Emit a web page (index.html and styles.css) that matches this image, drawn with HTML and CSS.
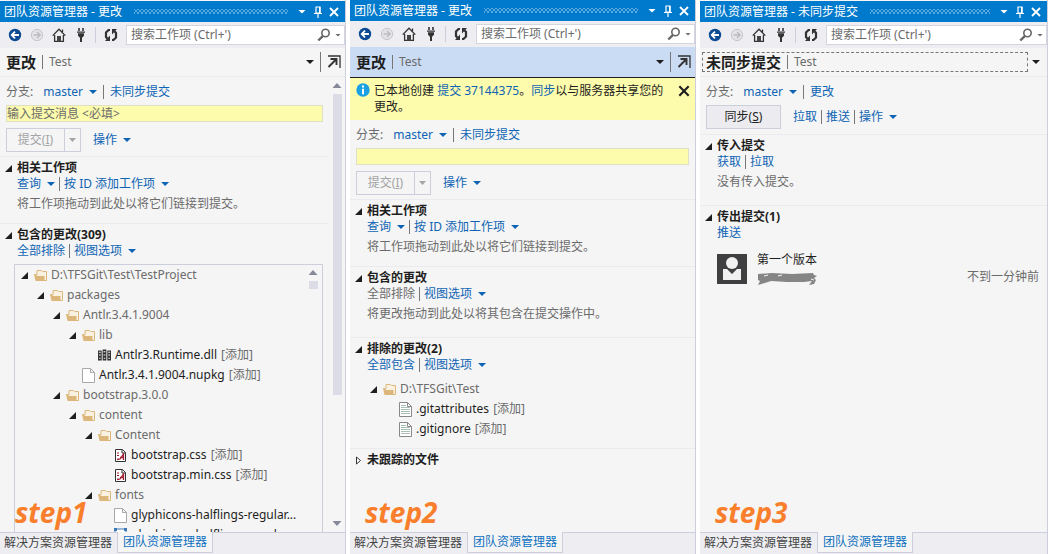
FILE: index.html
```html
<!DOCTYPE html>
<html lang="zh-CN">
<head>
<meta charset="utf-8">
<title>团队资源管理器</title>
<link rel="stylesheet" href="styles.css">
</head>
<body>
<svg class="defs" aria-hidden="true">
  <symbol id="back" viewBox="0 0 14 14"><circle cx="7" cy="7" r="6.2" fill="#0c4a92"/><path d="M11 7H4M7 3.6 3.7 7 7 10.4" fill="none" stroke="#fff" stroke-width="1.8"/></symbol>
  <symbol id="forward" viewBox="0 0 14 14"><circle cx="7" cy="7" r="5.6" fill="#e4e4e8" stroke="#c6c6ca"/><path d="M3.5 7H10M7 4l3 3-3 3" fill="none" stroke="#bcbcc0" stroke-width="1.5"/></symbol>
  <symbol id="home" viewBox="0 0 14 14"><path d="M.7 7.6 7 1.2l6.3 6.4M2.6 7v6.3h8.8V7M10.5 4V1.5" fill="none" stroke="#333" stroke-width="1.3"/><path d="M5 8h4v5.5H5z" fill="#444"/></symbol>
  <symbol id="plug" viewBox="0 0 14 14"><path d="M4.2 0h1.6v3H4.2zM8.2 0h1.6v3H8.2zM3 3.5h8v1.3H3zM4 5.3h6v2.5L8.4 9.4H8V14H6V9.4h-.4L4 7.8z" fill="#333"/></symbol>
  <symbol id="refresh" viewBox="0 0 14 14"><path d="M6 2H4.500L2 4.500v4.500l1.500 1.800M8 12h1.500L12 9.500V5l-1.500-1.800" fill="none" stroke="#333" stroke-width="2.2"/><path d="M6 7.500V13H1zM8 6.500V1h5z" fill="#333"/></symbol>
  <symbol id="search" viewBox="0 0 14 14"><circle cx="8.5" cy="5" r="3.7" fill="none" stroke="#666" stroke-width="1.6"/><path d="M6 7.8 1.3 12.5" stroke="#666" stroke-width="2.4"/></symbol>
  <symbol id="pin" viewBox="0 0 12 12"><path d="M4 1h4v6H4zM2 7.5h8M6 8v4" fill="none" stroke="#fff" stroke-width="1.2"/><path d="M7 1h1.5v6H7z" fill="#fff"/></symbol>
  <symbol id="close" viewBox="0 0 12 12"><path d="m2 2 8 8M10 2l-8 8" stroke="currentColor" stroke-width="1.8"/></symbol>
  <symbol id="popout" viewBox="0 0 14 14"><path d="M1 1h12v12" fill="none" stroke="#333" stroke-width="1.3"/><path d="M1.5 12 9.5 4M3.5 4h6v6" fill="none" stroke="#333" stroke-width="1.9"/></symbol>
  <symbol id="folder" viewBox="0 0 13 13"><path d="M3 6V1.500h4.500l1 1h4v9H10" fill="#fbf1e0" stroke="#dcb67a"/><path d="M0 5h2l1 2h7.500v5H1.500z" fill="#dcb67a"/></symbol>
  <symbol id="dll" viewBox="0 0 14 13"><path d="M0 1h4v11H0zM5 0h4v12H5zM10 1h4v11h-4z" fill="#333"/><path d="M1 3h2M1 6h2M6 2.5h2M6 6h2M11 3h2M11 6h2M1.2 9.5h1.6M6.2 9.5h1.6M11.2 9.5h1.6" stroke="#f5f5f5" stroke-width="1.2"/></symbol>
  <symbol id="file" viewBox="0 0 13 15"><path d="M.5.5h8l4 4v10H.5zM8.500.5v4h4" fill="#fff" stroke="#a8a8a8"/></symbol>
  <symbol id="css" viewBox="0 0 13 13"><path d="M1.500.5h7l3 3v9h-10z" fill="#fff" stroke="#333"/><path d="M8 .5v3.500h3.500" fill="none" stroke="#333"/><path d="M3 10.500 6 10l3.500-5v6M6 8.500h3.500" fill="none" stroke="#a31f34" stroke-width="1.3"/><path d="M3 4h2M3 6.500h2" stroke="#a31f34"/></symbol>
  <symbol id="text" viewBox="0 0 13 15"><path d="M.5.5h8l4 4v10H.5z" fill="#fff" stroke="#888"/><path d="M8.500.5v4h4" fill="none" stroke="#888"/><path d="M2 3.500h5M2 5.500h9M2 7.500h9M2 9.500h9M2 11.500h9" stroke="#a9bfb4"/></symbol>
  <symbol id="font" viewBox="0 0 13 15"><path d="M1 1h11v13H1z" fill="#fff" stroke="#3c78b4"/><path d="M0 0h3v3H0zM10 0h3v3h-3z" fill="#3c78b4"/></symbol>
  <symbol id="info" viewBox="0 0 14 14"><circle cx="7" cy="7" r="6.700" fill="#1ba1e2"/><path d="M6 2.500h2v2H6zM6 5.700h2v5.500H6z" fill="#fff"/></symbol>
  <symbol id="open" viewBox="0 0 7 7"><path d="M7 0v7H0z" fill="#1e1e1e"/></symbol>
  <symbol id="closed" viewBox="0 0 7 9"><path d="M1.500 1v7l4-3.500z" fill="#fff" stroke="#333"/></symbol>
</svg>

<main class="steps">
  <section class="panel">
    <header class="title">
      <h2>团队资源管理器 - 更改</h2><span class="grip"></span>
      <button aria-label="窗口选项"><i class="caret"></i></button>
      <button aria-label="固定"><svg><use href="#pin"/></svg></button>
      <button aria-label="关闭"><svg><use href="#close"/></svg></button>
    </header>
    <div class="toolbar">
      <button aria-label="后退"><svg><use href="#back"/></svg></button>
      <button aria-label="前进"><svg><use href="#forward"/></svg></button>
      <button aria-label="主页"><svg><use href="#home"/></svg></button>
      <button aria-label="连接"><svg><use href="#plug"/></svg></button>
      <span class="rule"></span>
      <button aria-label="刷新"><svg><use href="#refresh"/></svg></button>
      <div class="search"><input aria-label="搜索工作项" placeholder="搜索工作项 (Ctrl+')"><button aria-label="搜索"><svg><use href="#search"/></svg></button><button class="small" aria-label="搜索选项"><i class="caret"></i></button></div>
    </div>
    <div class="heading">
      <h1>更改</h1><span class="bar"></span><span class="project">Test</span>
      <button class="menu" aria-label="页面"><i class="caret"></i></button><span class="bar tall"></span>
      <button class="popout" aria-label="弹出"><svg><use href="#popout"/></svg></button>
    </div>
    <div class="body">
      <div class="content">
        <div class="branch"><span>分支:</span><button class="link">master<i class="caret"></i></button><span class="bar"></span><a href="#">未同步提交</a></div>
        <input class="message" aria-label="提交消息" placeholder="输入提交消息 &lt;必填&gt;">
        <div class="actions">
          <span class="split"><button disabled>提交(<u>I</u>)</button><button class="arrow" aria-label="提交选项" disabled><i class="caret"></i></button></span>
          <button class="link">操作<i class="caret"></i></button>
        </div>
        <section class="group">
          <h3><svg><use href="#open"/></svg>相关工作项</h3>
          <div class="links"><button class="link">查询<i class="caret"></i></button><span class="bar"></span><button class="link">按 ID 添加工作项<i class="caret"></i></button></div>
          <p>将工作项拖动到此处以将它们链接到提交。</p>
        </section>
        <section class="group grow">
          <h3><svg><use href="#open"/></svg>包含的更改(309)</h3>
          <div class="links"><a href="#">全部排除</a><span class="bar"></span><button class="link">视图选项<i class="caret"></i></button></div>
          <div class="treebox">
            <ul class="tree">
              <li><div class="row"><svg class="twist"><use href="#open"/></svg><svg class="icon"><use href="#folder"/></svg>D:\TFSGit\Test\TestProject</div>
                <ul>
                  <li><div class="row"><svg class="twist"><use href="#open"/></svg><svg class="icon"><use href="#folder"/></svg>packages</div>
                    <ul>
                      <li><div class="row"><svg class="twist"><use href="#open"/></svg><svg class="icon"><use href="#folder"/></svg>Antlr.3.4.1.9004</div>
                        <ul>
                          <li><div class="row"><svg class="twist"><use href="#open"/></svg><svg class="icon"><use href="#folder"/></svg>lib</div>
                            <ul><li><div class="row file"><svg class="icon"><use href="#dll"/></svg>Antlr3.Runtime.dll<small>[添加]</small></div></li></ul>
                          </li>
                          <li><div class="row file"><svg class="icon"><use href="#file"/></svg>Antlr.3.4.1.9004.nupkg<small>[添加]</small></div></li>
                        </ul>
                      </li>
                      <li><div class="row"><svg class="twist"><use href="#open"/></svg><svg class="icon"><use href="#folder"/></svg>bootstrap.3.0.0</div>
                        <ul>
                          <li><div class="row"><svg class="twist"><use href="#open"/></svg><svg class="icon"><use href="#folder"/></svg>content</div>
                            <ul>
                              <li><div class="row"><svg class="twist"><use href="#open"/></svg><svg class="icon"><use href="#folder"/></svg>Content</div>
                                <ul>
                                  <li><div class="row file"><svg class="icon"><use href="#css"/></svg>bootstrap.css<small>[添加]</small></div></li>
                                  <li><div class="row file"><svg class="icon"><use href="#css"/></svg>bootstrap.min.css<small>[添加]</small></div></li>
                                </ul>
                              </li>
                              <li><div class="row"><svg class="twist"><use href="#open"/></svg><svg class="icon"><use href="#folder"/></svg>fonts</div>
                                <ul>
                                  <li><div class="row file"><svg class="icon"><use href="#file"/></svg>glyphicons-halflings-regular...</div></li>
                                  <li><div class="row file"><svg class="icon"><use href="#font"/></svg>glyphicons-halflings-regular...</div></li>
                                </ul>
                              </li>
                            </ul>
                          </li>
                        </ul>
                      </li>
                    </ul>
                  </li>
                </ul>
              </li>
            </ul>
            <div class="scroll inner"><i class="up"></i><span></span></div>
          </div>
        </section>
      </div>
      <div class="scroll outer"><i class="up"></i><span></span><i class="down"></i></div>
      <strong class="step">step1</strong>
    </div>
    <nav class="tabs"><a href="#">解决方案资源管理器</a><a class="active" href="#">团队资源管理器</a></nav>
  </section>

  <section class="panel flush">
    <header class="title">
      <h2>团队资源管理器 - 更改</h2><span class="grip"></span>
      <button aria-label="窗口选项"><i class="caret"></i></button>
      <button aria-label="固定"><svg><use href="#pin"/></svg></button>
      <button aria-label="关闭"><svg><use href="#close"/></svg></button>
    </header>
    <div class="toolbar">
      <button aria-label="后退"><svg><use href="#back"/></svg></button>
      <button aria-label="前进"><svg><use href="#forward"/></svg></button>
      <button aria-label="主页"><svg><use href="#home"/></svg></button>
      <button aria-label="连接"><svg><use href="#plug"/></svg></button>
      <span class="rule"></span>
      <button aria-label="刷新"><svg><use href="#refresh"/></svg></button>
      <div class="search"><input aria-label="搜索工作项" placeholder="搜索工作项 (Ctrl+')"><button aria-label="搜索"><svg><use href="#search"/></svg></button><button class="small" aria-label="搜索选项"><i class="caret"></i></button></div>
    </div>
    <div class="heading selected">
      <h1>更改</h1><span class="bar"></span><span class="project">Test</span>
      <button class="menu" aria-label="页面"><i class="caret"></i></button><span class="bar tall"></span>
      <button class="popout" aria-label="弹出"><svg><use href="#popout"/></svg></button>
    </div>
    <div class="notice">
      <svg><use href="#info"/></svg>
      <p>已本地创建 <a href="#">提交 37144375</a>。<a href="#">同步</a>以与服务器共享您的更改。</p>
      <button aria-label="关闭通知"><svg><use href="#close"/></svg></button>
    </div>
    <div class="body">
      <div class="content">
        <div class="branch"><span>分支:</span><button class="link">master<i class="caret"></i></button><span class="bar"></span><a href="#">未同步提交</a></div>
        <input class="message" aria-label="提交消息">
        <div class="actions">
          <span class="split"><button disabled>提交(<u>I</u>)</button><button class="arrow" aria-label="提交选项" disabled><i class="caret"></i></button></span>
          <button class="link">操作<i class="caret"></i></button>
        </div>
        <section class="group">
          <h3><svg><use href="#open"/></svg>相关工作项</h3>
          <div class="links"><button class="link">查询<i class="caret"></i></button><span class="bar"></span><button class="link">按 ID 添加工作项<i class="caret"></i></button></div>
          <p>将工作项拖动到此处以将它们链接到提交。</p>
        </section>
        <section class="group roomy">
          <h3><svg><use href="#open"/></svg>包含的更改</h3>
          <div class="links"><span>全部排除</span><span class="bar"></span><button class="link">视图选项<i class="caret"></i></button></div>
          <p>将更改拖动到此处以将其包含在提交操作中。</p>
        </section>
        <section class="group">
          <h3><svg><use href="#open"/></svg>排除的更改(2)</h3>
          <div class="links"><a href="#">全部包含</a><span class="bar"></span><button class="link">视图选项<i class="caret"></i></button></div>
          <ul class="tree plain">
            <li><div class="row"><svg class="twist"><use href="#open"/></svg><svg class="icon"><use href="#folder"/></svg>D:\TFSGit\Test</div>
              <ul>
                <li><div class="row file"><svg class="icon"><use href="#text"/></svg>.gitattributes<small>[添加]</small></div></li>
                <li><div class="row file"><svg class="icon"><use href="#text"/></svg>.gitignore<small>[添加]</small></div></li>
              </ul>
            </li>
          </ul>
        </section>
        <section class="group">
          <h3><svg><use href="#closed"/></svg>未跟踪的文件</h3>
        </section>
      </div>
      <strong class="step">step2</strong>
    </div>
    <nav class="tabs"><a href="#">解决方案资源管理器</a><a class="active" href="#">团队资源管理器</a></nav>
  </section>

  <section class="panel">
    <header class="title">
      <h2>团队资源管理器 - 未同步提交</h2><span class="grip"></span>
      <button aria-label="窗口选项"><i class="caret"></i></button>
      <button aria-label="固定"><svg><use href="#pin"/></svg></button>
      <button aria-label="关闭"><svg><use href="#close"/></svg></button>
    </header>
    <div class="toolbar">
      <button aria-label="后退"><svg><use href="#back"/></svg></button>
      <button aria-label="前进"><svg><use href="#forward"/></svg></button>
      <button aria-label="主页"><svg><use href="#home"/></svg></button>
      <button aria-label="连接"><svg><use href="#plug"/></svg></button>
      <span class="rule"></span>
      <button aria-label="刷新"><svg><use href="#refresh"/></svg></button>
      <div class="search"><input aria-label="搜索工作项" placeholder="搜索工作项 (Ctrl+')"><button aria-label="搜索"><svg><use href="#search"/></svg></button><button class="small" aria-label="搜索选项"><i class="caret"></i></button></div>
    </div>
    <div class="heading focused">
      <div class="focus"><h1>未同步提交</h1><span class="bar"></span><span class="project">Test</span></div>
      <button class="menu" aria-label="页面"><i class="caret"></i></button>
    </div>
    <div class="body">
      <div class="content">
        <div class="branch"><span>分支:</span><button class="link">master<i class="caret"></i></button><span class="bar"></span><a href="#">更改</a></div>
        <div class="actions sync">
          <button class="primary">同步(<u>S</u>)</button>
          <div class="links"><a href="#">拉取</a><span class="bar"></span><a href="#">推送</a><span class="bar"></span><button class="link">操作<i class="caret"></i></button></div>
        </div>
        <section class="group roomy">
          <h3><svg><use href="#open"/></svg>传入提交</h3>
          <div class="links"><a href="#">获取</a><span class="bar"></span><a href="#">拉取</a></div>
          <p>没有传入提交。</p>
        </section>
        <section class="group">
          <h3><svg><use href="#open"/></svg>传出提交(1)</h3>
          <div class="links"><a href="#">推送</a></div>
          <article class="commit">
            <svg class="avatar" viewBox="0 0 30 30"><path d="M0 0h30v30H0z" fill="#3f3f42"/><circle cx="15" cy="9" r="6" fill="#f0f0f0"/><path d="M6 15h4l5 5 5-5h4v11H6z" fill="#f0f0f0"/></svg>
            <div class="who">
              <span>第一个版本</span>
              <svg class="scribble" viewBox="0 0 60 14"><path d="M1 3 15 2l20 1 21-1 1 2 3 1-3 2 2 2-2 4-5 1 3-4-8 1H30l-16-1-6 2-7 2 2-4-2-1z" fill="#858585"/><path d="m7 5 4-1M21 5l4-1M54 8l3 1" stroke="#f5f5f5" fill="none"/></svg>
            </div>
            <time>不到一分钟前</time>
          </article>
        </section>
      </div>
      <strong class="step">step3</strong>
    </div>
    <nav class="tabs"><a href="#">解决方案资源管理器</a><a class="active" href="#">团队资源管理器</a></nav>
  </section>
</main>
</body>
</html>
```

FILE: styles.css
```css
* { box-sizing: border-box; }
body, h1, h2, h3, p, ul { margin: 0; padding: 0; }
ul { list-style: none; }
body {
  background: #fff;
  color: #6b6b6b;
  font-family: "Noto Sans", "Noto Sans CJK SC", sans-serif;
  font-size: 12px;
  line-height: 16px;
}
button, input {
  font: inherit;
  color: inherit;
  padding: 0;
  border: 0;
  background: none;
}
svg { display: block; flex: none; }
a, .link { color: #0e64b4; text-decoration: none; white-space: nowrap; }
.defs { display: none; }

.steps {
  display: grid;
  grid-template-columns: 346fr 346fr 348fr;
  gap: 4px;
  height: 100vh;
}
.panel {
  display: flex;
  flex-direction: column;
  min-width: 0;
  min-height: 0;
  padding-top: 1px;
  border-right: 1px solid #cccedb;
  background: #f5f5f5;
}
.panel.flush { padding-top: 0; }

.caret {
  display: block;
  flex: none;
  width: 8px;
  height: 4px;
  background: currentColor;
  clip-path: polygon(0 0, 100% 0, 50% 100%);
}
.bar { flex: none; width: 1px; height: 14px; background: #777; }
.bar.tall { height: 20px; }

.title {
  display: flex;
  align-items: center;
  flex: none;
  gap: 4px;
  height: 21px;
  padding: 0 5px 0 4px;
  background: #007acc;
  color: #fff;
}
.title h2 { font-size: 12px; font-weight: 400; white-space: nowrap; }
.title svg { width: 12px; height: 12px; }
.title button { display: grid; place-items: center; width: 12px; height: 16px; }
.grip {
  flex: 1;
  height: 5px;
  margin: 0 4px 0 8px;
  background:
    radial-gradient(circle, #59a8de 1px, transparent 1px) 0 0 / 4px 4px,
    radial-gradient(circle, #59a8de 1px, transparent 1px) 2px 2px / 4px 4px;
}

.toolbar {
  display: flex;
  align-items: center;
  flex: none;
  gap: 8px;
  height: 26px;
  padding: 0 0 0 8px;
  background: #eeeef2;
}
.toolbar svg { width: 14px; height: 14px; }
.rule { width: 1px; height: 16px; margin-left: -1px; background: #cccedb; }
.search {
  display: flex;
  align-items: center;
  flex: 1;
  gap: 4px;
  min-width: 0;
  height: 20px;
  padding: 0 3px 0 4px;
  border: 1px solid #d4d5df;
  background: #fff;
}
.search input { flex: 1; min-width: 0; outline: 0; }
.search input::placeholder, .message::placeholder { color: #6b6b6b; opacity: 1; }
.search .caret { width: 6px; height: 3px; }

.heading {
  display: flex;
  align-items: center;
  flex: none;
  gap: 6px;
  height: 29px;
  padding: 0 4px 0 6px;
  border-bottom: 1px solid #eaeaee;
}
.heading h1 { color: #1e1e1e; font-size: 15px; line-height: 20px; white-space: nowrap; }
.heading .menu { margin-left: auto; color: #1e1e1e; }
.popout svg { width: 14px; height: 14px; }
.heading.selected { height: 31px; border-bottom-color: #1e1e1e; background: #cadcf4; }
.heading.focused { gap: 4px; padding: 0 7px 0 2px; }
.focus {
  display: flex;
  align-items: center;
  flex: 1;
  gap: 6px;
  height: 20px;
  padding-left: 3px;
  border: 1px dashed #777;
}

.notice {
  display: flex;
  flex: none;
  gap: 4px;
  padding: 5px 4px 5px 6px;
  background: #fdfbac;
  color: #1e1e1e;
}
.notice p { flex: 1; }
.notice svg { width: 14px; height: 14px; }
.notice button { align-self: flex-start; padding-top: 1px; }

.body { position: relative; display: flex; flex: 1; min-height: 0; overflow: hidden; }
.content { display: flex; flex-direction: column; flex: 1; min-width: 0; }
.branch {
  display: flex;
  align-items: center;
  flex: none;
  gap: 6px;
  padding: 7px 6px 5px;
}
.branch > span:first-child { margin-right: 4px; }
.link { display: inline-flex; align-items: center; gap: 6px; }
.message {
  flex: none;
  height: 17px;
  margin: 0 6px;
  border: 1px solid #e0e0c4;
  background: #fdfbac;
}
.actions { display: flex; align-items: center; flex: none; gap: 12px; padding: 6px 6px 4px; }
.actions button { height: 24px; }
.split { display: flex; border: 1px solid #cccedb; color: #a2a4a5; }
.actions .split button { width: 57px; height: 22px; }
.actions .split .arrow { display: grid; place-items: center; width: 16px; border-left: 1px solid #cccedb; }
.split .caret { width: 7px; }
.actions .primary { width: 75px; border: 1px solid #cccedb; background: #ececf0; color: #1e1e1e; }
.actions.sync { padding: 0 6px 5px; }

.group { flex: none; padding: 3px 0 9px 5px; border-top: 1px solid #ebebef; }
.group.roomy { padding-bottom: 13px; }
.group.grow { display: flex; flex-direction: column; flex: 1; min-height: 0; padding-bottom: 0; }
.group h3 { display: flex; align-items: center; gap: 5px; color: #1e1e1e; font-size: 12px; }
.group h3 svg { width: 7px; height: 9px; }
.group > .links, .group > p { padding-left: 12px; }
.links { display: flex; align-items: center; gap: 4px; }
.group > p { margin-top: 2px; line-height: 20px; }

.treebox {
  display: flex;
  flex: 1;
  min-height: 0;
  margin: 5px 6px 0 9px;
  overflow: hidden;
  border: 1px solid #cccedb;
  border-bottom: 0;
}
.tree { flex: 1; min-width: 0; padding-left: 6px; }
.tree ul { padding-left: 16px; }
.tree.plain { padding: 6px 0 0 15px; }
.row { display: flex; align-items: center; gap: 4px; height: 20px; white-space: nowrap; }
.row.file { padding-left: 13px; color: #1e1e1e; }
.row small { color: #6b6b6b; font-size: 12px; }
.twist { width: 7px; height: 7px; margin-right: 2px; }
.icon { width: 13px; height: 13px; }
.file .icon { height: 15px; }

.scroll { display: flex; flex-direction: column; align-items: center; flex: none; gap: 6px; }
.scroll span { width: 9px; background: #dcdce6; }
.up, .down { width: 9px; height: 5px; background: #868999; }
.up { clip-path: polygon(50% 0, 100% 100%, 0 100%); }
.down { clip-path: polygon(0 0, 100% 0, 50% 100%); margin-top: auto; }
.outer { width: 16px; padding: 6px 0; }
.outer span { flex: 0 0 68%; }
.inner { width: 18px; padding-top: 5px; }
.inner span { height: 8px; }

.commit { display: flex; gap: 10px; padding: 13px 8px 0 12px; }
.avatar { width: 30px; height: 30px; }
.who { flex: 1; margin-top: -2px; color: #1e1e1e; }
.scribble { width: 60px; height: 14px; margin-top: 3px; }
.commit time { align-self: flex-end; }

.step {
  position: absolute;
  bottom: 2px;
  left: 15px;
  color: #f97f2c;
  font-size: 28px;
  font-style: italic;
  line-height: 36px;
}

.tabs { display: flex; flex: none; height: 22px; border-top: 1px solid #cccedb; background: #eeeef2; }
.tabs a { padding: 2px 4px; color: #444; }
.tabs .active {
  height: 21px;
  margin: -1px 0 0 1px;
  padding: 2px 5px;
  border: 1px solid #cccedb;
  border-top: 0;
  background: #f5f5f5;
  color: #0e70c0;
}
```
